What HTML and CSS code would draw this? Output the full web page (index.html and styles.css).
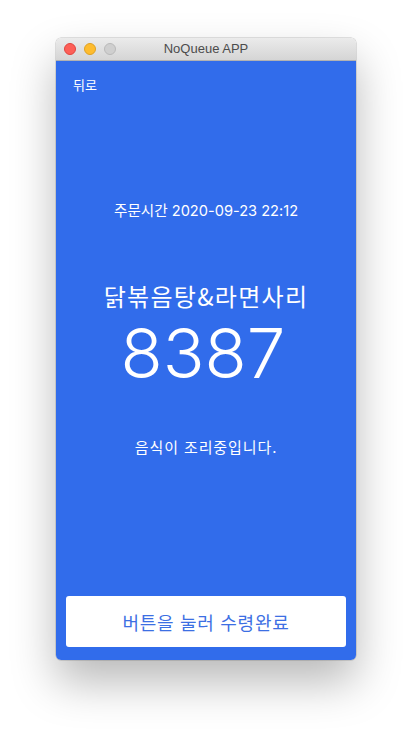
FILE: index.html
```html
<!DOCTYPE html>
<html lang="ko">
<head>
<meta charset="utf-8">
<link rel="stylesheet" href="styles.css">
<title>NoQueue APP</title>
</head>
<body>
<div class="window">
  <div class="titlebar">
    <div class="lights">
      <span class="light red"></span>
      <span class="light yellow"></span>
      <span class="light gray"></span>
    </div>
    <div class="title">NoQueue APP</div>
  </div>
  <div class="content">
    <div class="back">뒤로</div>
    <div class="time">주문시간 2020-09-23 22:12</div>
    <div class="name">닭볶음탕&amp;라면사리</div>
    <div class="number">8387</div>
    <div class="status">음식이 조리중입니다.</div>
    <button class="done">버튼을 눌러 수령완료</button>
  </div>
</div>
</body>
</html>
```
FILE: styles.css
```css
html, body {
  margin: 0;
  padding: 0;
  background: #ffffff;
}
body {
  width: 412px;
  height: 734px;
  padding: 38px 0 0 56px;
  box-sizing: border-box;
  font-family: "Inter", "Noto Sans CJK KR", sans-serif;
  overflow: hidden;
}
.window {
  width: 300px;
  height: 622px;
  border-radius: 5px;
  overflow: hidden;
  display: flex;
  flex-direction: column;
  box-shadow: 0 22px 45px rgba(0,0,0,0.28), 0 0 0 0.5px rgba(0,0,0,0.22);
}
.titlebar {
  height: 22px;
  flex: none;
  position: relative;
  background: linear-gradient(#ebebeb, #d5d5d5);
  border-bottom: 1px solid #b2b2b2;
  display: flex;
  align-items: center;
  justify-content: center;
}
.lights {
  position: absolute;
  left: 8px;
  top: 5px;
  display: flex;
  gap: 8px;
}
.light {
  width: 12px;
  height: 12px;
  border-radius: 50%;
  box-sizing: border-box;
}
.red { background: #fd5f57; border: 0.5px solid #e0443e; }
.yellow { background: #febc2e; border: 0.5px solid #dea123; }
.gray { background: #cfcfcf; border: 0.5px solid #b9b9b9; }
.title {
  font-family: "Liberation Sans", "Noto Sans", sans-serif;
  font-size: 13px;
  color: #4c4c4c;
  line-height: 16px;
}
.content {
  flex: 1;
  background: #316ceb;
  color: #ffffff;
  display: flex;
  flex-direction: column;
  align-items: center;
  padding: 0 10px;
  font-family: "Noto Sans CJK KR", sans-serif;
}
.back {
  align-self: flex-start;
  margin: 14px 0 0 7px;
  font-size: 13px;
  line-height: 20px;
}
.time {
  margin-top: 106px;
  font-size: 14.6px;
  line-height: 20px;
  font-family: "Inter", "Noto Sans CJK KR", sans-serif;
}
.name {
  margin-top: 60px;
  font-size: 24px;
  line-height: 30px;
  letter-spacing: 1.3px;
}
.number {
  margin-top: 2px;
  margin-right: 6px;
  font-family: "Inter", sans-serif;
  font-weight: 300;
  font-size: 69px;
  line-height: 80px;
}
.status {
  margin-top: 44px;
  font-size: 15px;
  line-height: 20px;
  letter-spacing: 0.9px;
}
.done {
  margin-top: auto;
  margin-bottom: 13px;
  width: 280px;
  height: 51px;
  border: none;
  border-radius: 3px;
  background: #ffffff;
  color: #3c6fe3;
  font-family: "Noto Sans CJK KR", sans-serif;
  font-size: 18px;
  letter-spacing: 0.7px;
  padding: 0;
}
```
